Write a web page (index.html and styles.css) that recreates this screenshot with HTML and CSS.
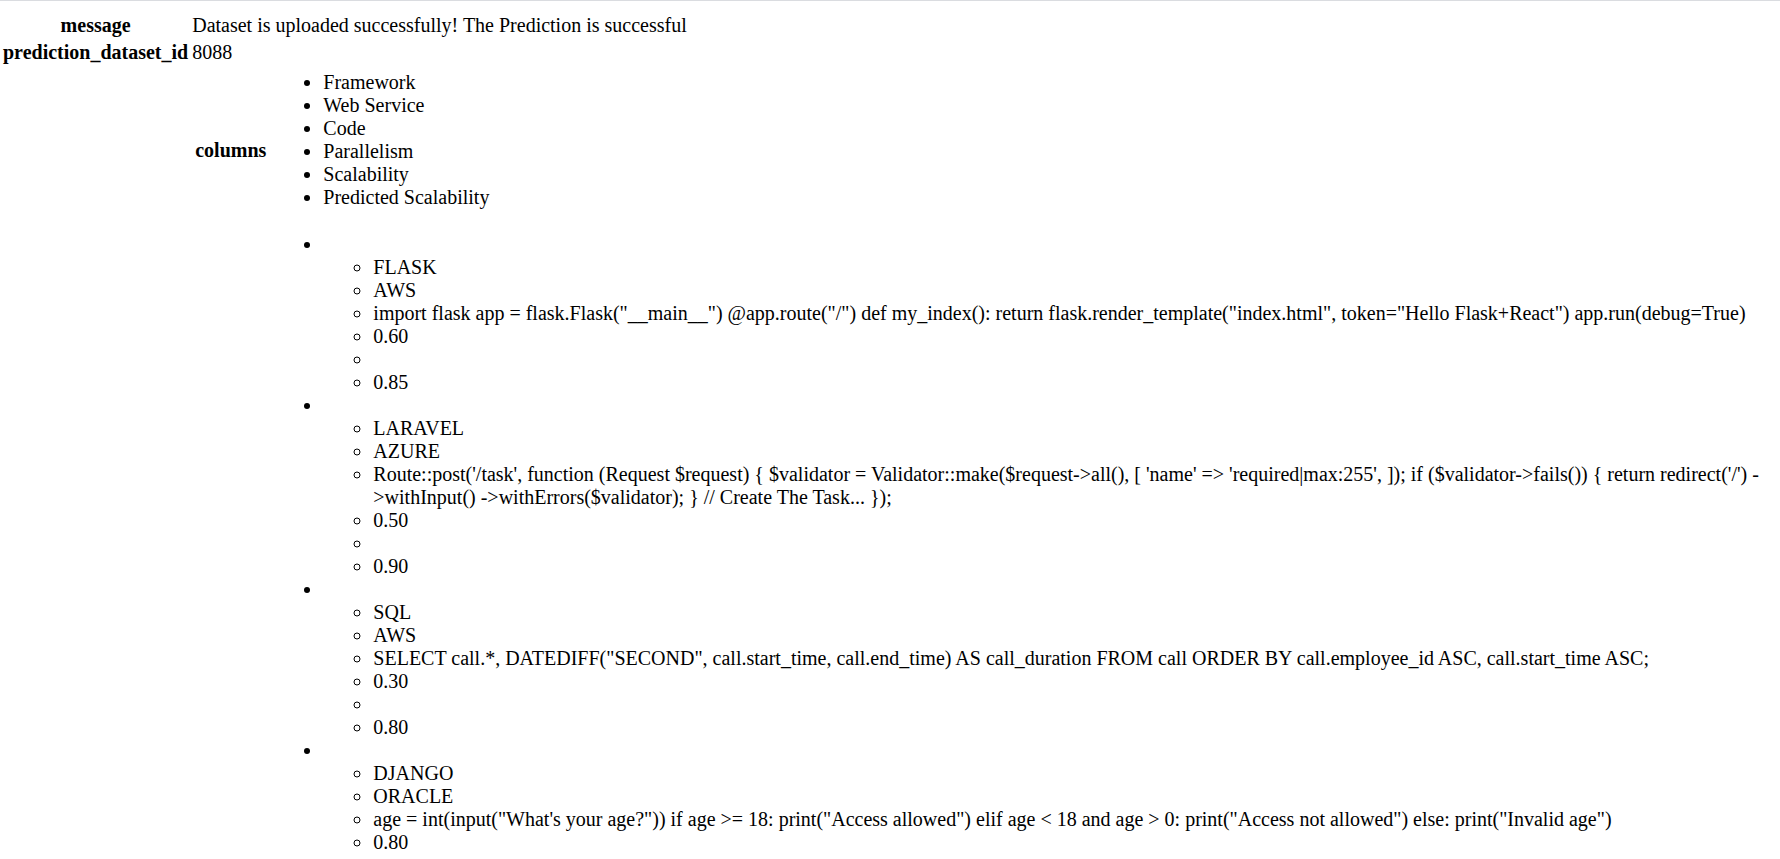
FILE: index.html
```html
<!DOCTYPE html>
<html lang="en">
<head>
  <meta charset="UTF-8" />
  <title>Prediction Result</title>
  <link rel="stylesheet" href="styles.css">
</head>
<body>
  <table class="result">
    <tr>
      <th>message</th>
      <td>Dataset is uploaded successfully! The Prediction is successful</td>
    </tr>
    <tr>
      <th>prediction_dataset_id</th>
      <td>8088</td>
    </tr>
    <tr>
      <th>prediction</th>
      <td>
        <table class="result">
          <tr>
            <th>columns</th>
            <td>
              <ul class="list">
                <li>Framework</li>
                <li>Web Service</li>
                <li>Code</li>
                <li>Parallelism</li>
                <li>Scalability</li>
                <li>Predicted Scalability</li>
              </ul>
            </td>
          </tr>
          <tr>
            <th>data</th>
            <td>
              <ul class="list">
                <li class="entry">
                  <ul class="sub">
                    <li>FLASK</li>
                    <li>AWS</li>
                    <li>import flask app = flask.Flask("__main__") @app.route("/") def my_index(): return flask.render_template("index.html", token="Hello Flask+React") app.run(debug=True)</li>
                    <li>0.60</li>
                    <li></li>
                    <li>0.85</li>
                  </ul>
                </li>
                <li class="entry">
                  <ul class="sub">
                    <li>LARAVEL</li>
                    <li>AZURE</li>
                    <li>Route::post('/task', function (Request $request) { $validator = Validator::make($request-&gt;all(), [ 'name' =&gt; 'required|max:255', ]); if ($validator-&gt;fails()) { return redirect('/') -&gt;withInput() -&gt;withErrors($validator); } // Create The Task... });</li>
                    <li>0.50</li>
                    <li></li>
                    <li>0.90</li>
                  </ul>
                </li>
                <li class="entry">
                  <ul class="sub">
                    <li>SQL</li>
                    <li>AWS</li>
                    <li>SELECT call.*, DATEDIFF("SECOND", call.start_time, call.end_time) AS call_duration FROM call ORDER BY call.employee_id ASC, call.start_time ASC;</li>
                    <li>0.30</li>
                    <li></li>
                    <li>0.80</li>
                  </ul>
                </li>
                <li class="entry">
                  <ul class="sub">
                    <li>DJANGO</li>
                    <li>ORACLE</li>
                    <li>age = int(input("What's your age?")) if age &gt;= 18: print("Access allowed") elif age &lt; 18 and age &gt; 0: print("Access not allowed") else: print("Invalid age")</li>
                    <li>0.80</li>
                    <li></li>
                    <li>0.75</li>
                  </ul>
                </li>
                <li class="entry">
                  <ul class="sub">
                    <li>EXPRESS</li>
                    <li>GCP</li>
                    <li>const express = require('express') const app = express() app.get('/', (req, res) =&gt; { res.send('Hello World!') }) app.listen(3000)</li>
                    <li>0.70</li>
                    <li></li>
                    <li>0.85</li>
                  </ul>
                </li>
                <li class="entry">
                  <ul class="sub">
                    <li>SPRING</li>
                    <li>AWS</li>
                    <li>@RestController public class HelloController { @GetMapping("/") public String index() { return "Greetings from Spring Boot!"; } }</li>
                    <li>0.65</li>
                    <li></li>
                    <li>0.90</li>
                  </ul>
                </li>
                <li class="entry">
                  <ul class="sub">
                    <li>REACT</li>
                    <li>AZURE</li>
                    <li>function App() { const [count, setCount] = useState(0); return &lt;button onClick={() =&gt; setCount(count + 1)}&gt;{count}&lt;/button&gt;; }</li>
                    <li>0.40</li>
                    <li></li>
                    <li>0.70</li>
                  </ul>
                </li>
                <li class="entry">
                  <ul class="sub">
                    <li>RAILS</li>
                    <li>HEROKU</li>
                    <li>class ArticlesController &lt; ApplicationController def index @articles = Article.all end end</li>
                    <li>0.55</li>
                    <li></li>
                    <li>0.80</li>
                  </ul>
                </li>
                <li class="entry">
                  <ul class="sub">
                    <li>FASTAPI</li>
                    <li>AWS</li>
                    <li>from fastapi import FastAPI app = FastAPI() @app.get("/") async def root(): return {"message": "Hello World"}</li>
                    <li>0.75</li>
                    <li></li>
                    <li>0.95</li>
                  </ul>
                </li>
                <li class="entry">
                  <ul class="sub">
                    <li>ANGULAR</li>
                    <li>GCP</li>
                    <li>@Component({ selector: 'app-root', template: '&lt;h1&gt;{{title}}&lt;/h1&gt;' }) export class AppComponent { title = 'Hello'; }</li>
                    <li>0.45</li>
                    <li></li>
                    <li>0.75</li>
                  </ul>
                </li>
                <li class="entry">
                  <ul class="sub">
                    <li>NOSQL</li>
                    <li>AZURE</li>
                    <li>db.users.find({ age: { $gt: 18 } }).sort({ name: 1 })</li>
                    <li>0.35</li>
                    <li></li>
                    <li>0.85</li>
                  </ul>
                </li>
              </ul>
            </td>
          </tr>
        </table>
      </td>
    </tr>
  </table>
</body>
</html>
```

FILE: styles.css
```css
html {
  border-top: 1px solid #dadce0;
}

body {
  margin: 10px 0 0 0;
  font-family: 'Liberation Serif', 'Times New Roman', serif;
  font-size: 20px;
  color: #000;
  background: #fff;
}

.result {
  border-spacing: 2px;
  font-size: 20px;
}

.result th,
.result td {
  padding: 1px;
}

.result th {
  font-weight: bold;
  text-align: center;
  vertical-align: middle;
}

.result td {
  text-align: left;
  vertical-align: middle;
}

.list {
  margin: 0 0 20px 0;
  padding-left: 53px;
  list-style: disc;
}

/* keep the outer bullet on a line of its own */
.entry::before {
  content: "\a0";
}

.sub {
  margin: 0;
  padding-left: 50px;
  list-style: circle;
}

.sub li {
  min-height: 23px;
}
```
